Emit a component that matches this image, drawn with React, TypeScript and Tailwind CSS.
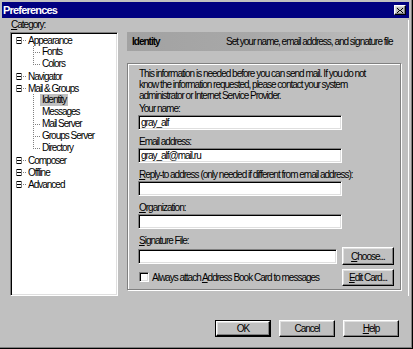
import React from 'react';

const sunken =
  "border border-t-[#808080] border-l-[#808080] border-r-white border-b-white shadow-[inset_1px_1px_0_#000,inset_-1px_-1px_0_#dfdfdf]";
const raised =
  "border border-t-white border-l-white border-r-black border-b-black shadow-[inset_-1px_-1px_0_#808080,inset_1px_1px_0_#dfdfdf]";

function U({ children }: { children: React.ReactNode }) {
  return <span className="underline underline-offset-[1px]">{children}</span>;
}

function NodeIcon() {
  return (
    <svg width="12" height="12" viewBox="0 0 12 12" shapeRendering="crispEdges" className="shrink-0">
      <rect x="0" y="3" width="6" height="1" fill="#000" />
      <rect x="0" y="6" width="6" height="1" fill="#000" />
      <rect x="0" y="9" width="6" height="1" fill="#000" />
      <rect x="0" y="3" width="1" height="7" fill="#808080" />
      <rect x="5" y="3" width="1" height="7" fill="#808080" />
      <rect x="7" y="6" width="1" height="1" fill="#808080" />
      <rect x="9" y="6" width="1" height="1" fill="#808080" />
    </svg>
  );
}

function Connector({ branch, last }: { branch: boolean; last: boolean }) {
  const vDots = [];
  const end = last ? 7 : 12;
  for (let y = 0; y < end; y += 2) vDots.push(<rect key={'v' + y} x="21" y={y} width="1" height="1" fill="#808080" />);
  const hDots = [];
  if (branch) for (let x = 23; x < 28; x += 2) hDots.push(<rect key={'h' + x} x={x} y="6" width="1" height="1" fill="#808080" />);
  return (
    <svg width="28" height="12" viewBox="0 0 28 12" shapeRendering="crispEdges" className="shrink-0">
      {vDots}
      {hDots}
    </svg>
  );
}

type Row = { label: string; level: 0 | 1; branch?: boolean; last?: boolean; selected?: boolean };

const rows: Row[] = [
  { label: 'Appearance', level: 0 },
  { label: 'Fonts', level: 1, branch: true },
  { label: 'Colors', level: 1, branch: true, last: true },
  { label: 'Navigator', level: 0 },
  { label: 'Mail & Groups', level: 0 },
  { label: 'Identity', level: 1, selected: true },
  { label: 'Messages', level: 1 },
  { label: 'Mail Server', level: 1, branch: true },
  { label: 'Groups Server', level: 1, branch: true },
  { label: 'Directory', level: 1, branch: true, last: true },
  { label: 'Composer', level: 0 },
  { label: 'Offline', level: 0 },
  { label: 'Advanced', level: 0 },
];

function Field({ label, value, first }: { label: React.ReactNode; value?: string; first?: boolean }) {
  return (
    <div className={first ? 'mt-[2px]' : 'mt-[6px]'}>
      <div className="h-[11px] pl-[1px] whitespace-nowrap">{label}</div>
      <div className={`mt-[1px] w-[204px] h-[15px] bg-white ${sunken} pl-[2px] flex items-center whitespace-nowrap`}>
        {value}
      </div>
    </div>
  );
}

function Button({ children, def, w = 'w-[56px]', h = 'h-[17px]' }: { children: React.ReactNode; def?: boolean; w?: string; h?: string }) {
  if (def) {
    return (
      <div className={`${w} ${h} border border-black flex`}>
        <div className={`flex-1 ${raised} flex items-center justify-center`}>{children}</div>
      </div>
    );
  }
  return <div className={`${w} ${h} ${raised} flex items-center justify-center whitespace-nowrap`}>{children}</div>;
}

export default function App() {
  return (
    <div className="w-[413px] h-[349px] bg-[#c0c0c0] border-r border-b border-black font-['Liberation_Sans',Arial,sans-serif] text-[10px] leading-[11px] tracking-[-1px] text-black overflow-hidden">
      <div className="h-full border-r border-b border-[#808080] flex flex-col">
        {/* Title bar */}
        <div className="mx-[2px] mt-[2px] h-[16px] bg-[#000080] flex items-center justify-between pl-[1px] pr-[3px]">
          <span className="text-white font-bold text-[11px] leading-[12px] tracking-[-0.8px]">Preferences</span>
          <div className={`w-[12px] h-[10px] bg-[#c0c0c0] ${raised} flex items-center justify-center`}>
            <svg width="6" height="5" viewBox="0 0 6 5" shapeRendering="crispEdges">
              <path d="M0 0h1v1h-1zM5 0h1v1h-1zM1 1h1v1h-1zM4 1h1v1h-1zM2 2h2v1h-2zM1 3h1v1h-1zM4 3h1v1h-1zM0 4h1v1h-1zM5 4h1v1h-1z" fill="#000" />
            </svg>
          </div>
        </div>

        <div className="flex">
          {/* Left: category tree */}
          <div className="ml-[10px] w-[108px] flex flex-col">
            <div className="mt-[1px] h-[11px] pl-[1px]">
              <U>C</U>ategory:
            </div>
            <div className={`mt-[2px] h-[264px] bg-white ${sunken} pt-[1px]`}>
              {rows.map((r) =>
                r.level === 0 ? (
                  <div key={r.label} className="h-[12px] flex items-center pl-[5px] whitespace-nowrap">
                    <NodeIcon />
                    <span>{r.label}</span>
                  </div>
                ) : (
                  <div key={r.label} className="h-[12px] flex items-center pl-[1px] whitespace-nowrap">
                    <Connector branch={!!r.branch} last={!!r.last} />
                    <span className={`px-[2px] h-[12px] leading-[12px] ${r.selected ? 'bg-[#c0c0c0]' : ''}`}>{r.label}</span>
                  </div>
                )
              )}
            </div>
          </div>

          {/* Right panel */}
          <div className="ml-[9px] w-[274px] pt-[14px] flex flex-col">
            <div className="h-[19px] flex items-center pl-[5px] bg-[linear-gradient(to_right,#a2a2a2,#a8a8a8_45%,#b6b6b6_75%,#c0c0c0_95%)] whitespace-nowrap">
              <span className="w-[94px] font-bold">Identity</span>
              <span>Set your name, email address, and signature file</span>
            </div>

            <div className="mt-[12px] h-[227px] border border-[#808080] shadow-[inset_1px_1px_0_#fff,1px_1px_0_#fff] pt-[4px] pl-[10px] flex flex-col">
              <div className="pl-[1px] whitespace-nowrap">
                This information is needed before you can send mail. If you do not
                <br />
                know the information requested, please contact your system
                <br />
                administrator or Internet Service Provider.
              </div>
              <Field first label="Your name:" value="gray_alf" />
              <Field label="Email address:" value="gray_alf@mail.ru" />
              <Field
                label={
                  <>
                    <U>R</U>eply-to address (only needed if different from email address):
                  </>
                }
              />
              <Field
                label={
                  <>
                    <U>O</U>rganization:
                  </>
                }
              />
              <div className="mt-[6px]">
                <div className="h-[11px] pl-[1px] whitespace-nowrap">
                  <U>S</U>ignature File:
                </div>
                <div className="mt-[1px] w-[256px] flex items-center justify-between">
                  <div className={`w-[199px] h-[15px] bg-white ${sunken}`} />
                  <Button w="w-[52px]" h="h-[18px]">
                    <U>C</U>hoose...
                  </Button>
                </div>
              </div>
              <div className="mt-[3px] w-[256px] h-[18px] flex items-center justify-between">
                <div className="flex items-center pl-[1px] whitespace-nowrap">
                  <div className={`w-[10px] h-[10px] bg-white ${sunken}`} />
                  <span className="ml-[3px]">
                    Always attach <U>A</U>ddress Book Card to messages
                  </span>
                </div>
                <Button w="w-[52px]" h="h-[17px]">
                  <U>E</U>dit Card...
                </Button>
              </div>
            </div>
          </div>

          <div className="ml-auto mr-[2px] mt-[2px] w-px bg-white" />
        </div>

        {/* Bottom buttons */}
        <div className="mt-[24px] flex justify-end gap-[8px] pr-[12px]">
          <Button def>OK</Button>
          <Button>Cancel</Button>
          <Button>
            <U>H</U>elp
          </Button>
        </div>
      </div>
    </div>
  );
}
